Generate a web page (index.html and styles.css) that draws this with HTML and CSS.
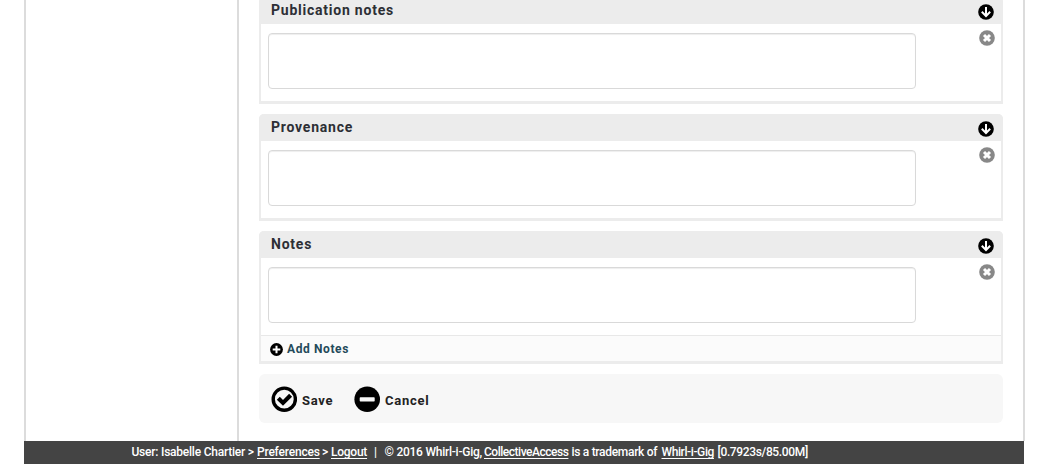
FILE: index.html
```html
<!DOCTYPE html>
<html lang="en">
<head>
<meta charset="utf-8">
<title>Object editor</title>
<link rel="stylesheet" href="styles.css">
</head>
<body>
<svg class="symbols" aria-hidden="true">
  <symbol id="down" viewBox="0 0 16 16"><circle cx="8" cy="8" r="7.8"/><path class="line" d="M8 3v9M3.8 7.8 8 12l4.200-4.200"/></symbol>
  <symbol id="remove" viewBox="0 0 16 16"><circle cx="8" cy="8" r="7.800"/><path class="thick" d="m5 5 6 6m0-6-6 6"/></symbol>
  <symbol id="plus" viewBox="0 0 13 13"><circle cx="6.500" cy="6.500" r="6.400"/><path class="line" d="M6.500 2.700v7.600M2.700 6.500h7.600"/></symbol>
</svg>
<div class="page">
  <div class="columns">
    <aside class="sidebar"></aside>
    <main class="editor">
      <section class="panel">
        <h2 class="panel-title"><span>Publication notes</span><svg class="icon"><use href="#down"/></svg></h2>
        <div class="panel-body"><textarea class="field"></textarea><svg class="icon remove"><use href="#remove"/></svg></div>
      </section>
      <section class="panel">
        <h2 class="panel-title"><span>Provenance</span><svg class="icon"><use href="#down"/></svg></h2>
        <div class="panel-body"><textarea class="field"></textarea><svg class="icon remove"><use href="#remove"/></svg></div>
      </section>
      <section class="panel">
        <h2 class="panel-title"><span>Notes</span><svg class="icon"><use href="#down"/></svg></h2>
        <div class="panel-body"><textarea class="field"></textarea><svg class="icon remove"><use href="#remove"/></svg></div>
        <div class="add-row"><svg class="icon-add"><use href="#plus"/></svg><span>Add Notes</span></div>
      </section>
      <div class="actions">
        <div class="action save"><svg class="icon-action" viewBox="0 0 26 26"><circle class="ring" cx="13.300" cy="13.200" r="11.100"/><path class="check" d="m7.300 12.200 4.700 4.700 7.600-7.600"/></svg><span>Save</span></div>
        <div class="action"><svg class="icon-action" viewBox="0 0 26 26"><circle cx="13.200" cy="13.200" r="12.800"/><rect class="bar" x="5.700" y="11.200" width="15" height="4.300" rx=".7"/></svg><span>Cancel</span></div>
      </div>
    </main>
  </div>
  <footer class="footer">
    <span class="f-user">User: Isabelle Chartier &gt;</span>
    <span class="f-pref"><span class="link">Preferences</span></span>
    <span class="f-gt">&gt;</span>
    <span class="f-logout"><span class="link">Logout</span></span>
    <span class="f-bar">|</span>
    <span class="f-copy">© 2016 Whirl-i-Gig,</span>
    <span class="f-ca"><span class="link">CollectiveAccess</span></span>
    <span class="f-tm">is a trademark of</span>
    <span class="f-wg"><span class="link">Whirl-i-Gig</span></span>
    <span class="f-time">[0.7923s/85.00M]</span>
  </footer>
</div>
</body>
</html>
```
FILE: styles.css
```css
* { box-sizing: border-box; }
body { margin: 0; background: #fff; font-family: Roboto, "Liberation Sans", sans-serif; overflow: hidden; }
.symbols { display: none; }
.page { width: 1001px; height: 464px; margin-left: 24px; }
.columns { display: flex; height: 441px; border: solid #dcdcdc; border-width: 0 2px; overflow: hidden; }
.sidebar { width: 213px; border-right: 2px solid #dcdcdc; }
.editor { width: 744px; margin: -3px 0 0 20px; flex: none; }
.panel { margin-bottom: 10px; border: solid #ececec; border-width: 0 2px 3px; border-radius: 5px 5px 0 0; }
.panel-title { display: flex; justify-content: space-between; height: 27px; margin: 0 -2px; padding: 0 9px 0 12px; background: #ececec; border-radius: 5px 5px 0 0; color: #2d2f35; font-size: 14px; line-height: 27px; font-weight: 700; letter-spacing: .77px; }
.icon { width: 16px; height: 16px; margin-top: 7px; flex: none; }
.line { fill: none; stroke: #fff; stroke-width: 2; }
.thick { fill: none; stroke: #fff; stroke-width: 3; }
.remove { margin-top: -3px; fill: #888; }
.panel-body { display: flex; justify-content: space-between; height: 77px; padding: 9px 6px 0 7px; }
.field { width: 648px; height: 56px; padding: 4px; border: 1px solid #d9d9d9; border-radius: 4px; box-shadow: inset 0 1px 1px #eee; resize: none; background: #fff; }
.add-row { display: flex; align-items: center; gap: 4px; height: 26px; padding: 1px 0 0 9px; border-top: 1px solid #e8e8e8; background: #fbfbfb; color: #244a5a; font-size: 12px; line-height: 14px; font-weight: 700; letter-spacing: .6px; }
.icon-add { width: 13px; height: 13px; margin-top: 1px; }
.actions { display: flex; height: 49px; padding: 12px 12px 0; border-radius: 6px; background: #f7f7f7; }
.action { display: flex; gap: 5px; height: 26px; color: #222; font-size: 13px; line-height: 30px; font-weight: 700; letter-spacing: .75px; }
.save { width: 83px; }
.icon-action { width: 26px; height: 26px; }
.ring { fill: none; stroke: #000; stroke-width: 3.400; }
.check { fill: none; stroke: #000; stroke-width: 4.200; }
.bar { fill: #f7f7f7; }
.footer { display: flex; width: 1000px; height: 23px; padding-left: 107.500px; background: #444; color: #fff; font-size: 12px; line-height: 22px; white-space: nowrap; font-weight: 500; }
.footer > span { flex: none; }
.link { text-decoration: underline; text-decoration-thickness: 1px; text-underline-offset: 2px; }
.f-user { width: 125.500px; letter-spacing: -.23px; }
.f-pref { width: 65px; letter-spacing: -.2px; }
.f-gt { width: 9px; }
.f-logout { width: 43px; letter-spacing: -.25px; }
.f-bar { width: 10.500px; }
.f-copy { width: 99.500px; letter-spacing: -.25px; }
.f-ca { width: 87.500px; letter-spacing: -.48px; }
.f-tm { width: 90px; letter-spacing: -.3px; }
.f-wg { width: 56px; letter-spacing: -.4px; }
.f-time { letter-spacing: -.35px; }
```
